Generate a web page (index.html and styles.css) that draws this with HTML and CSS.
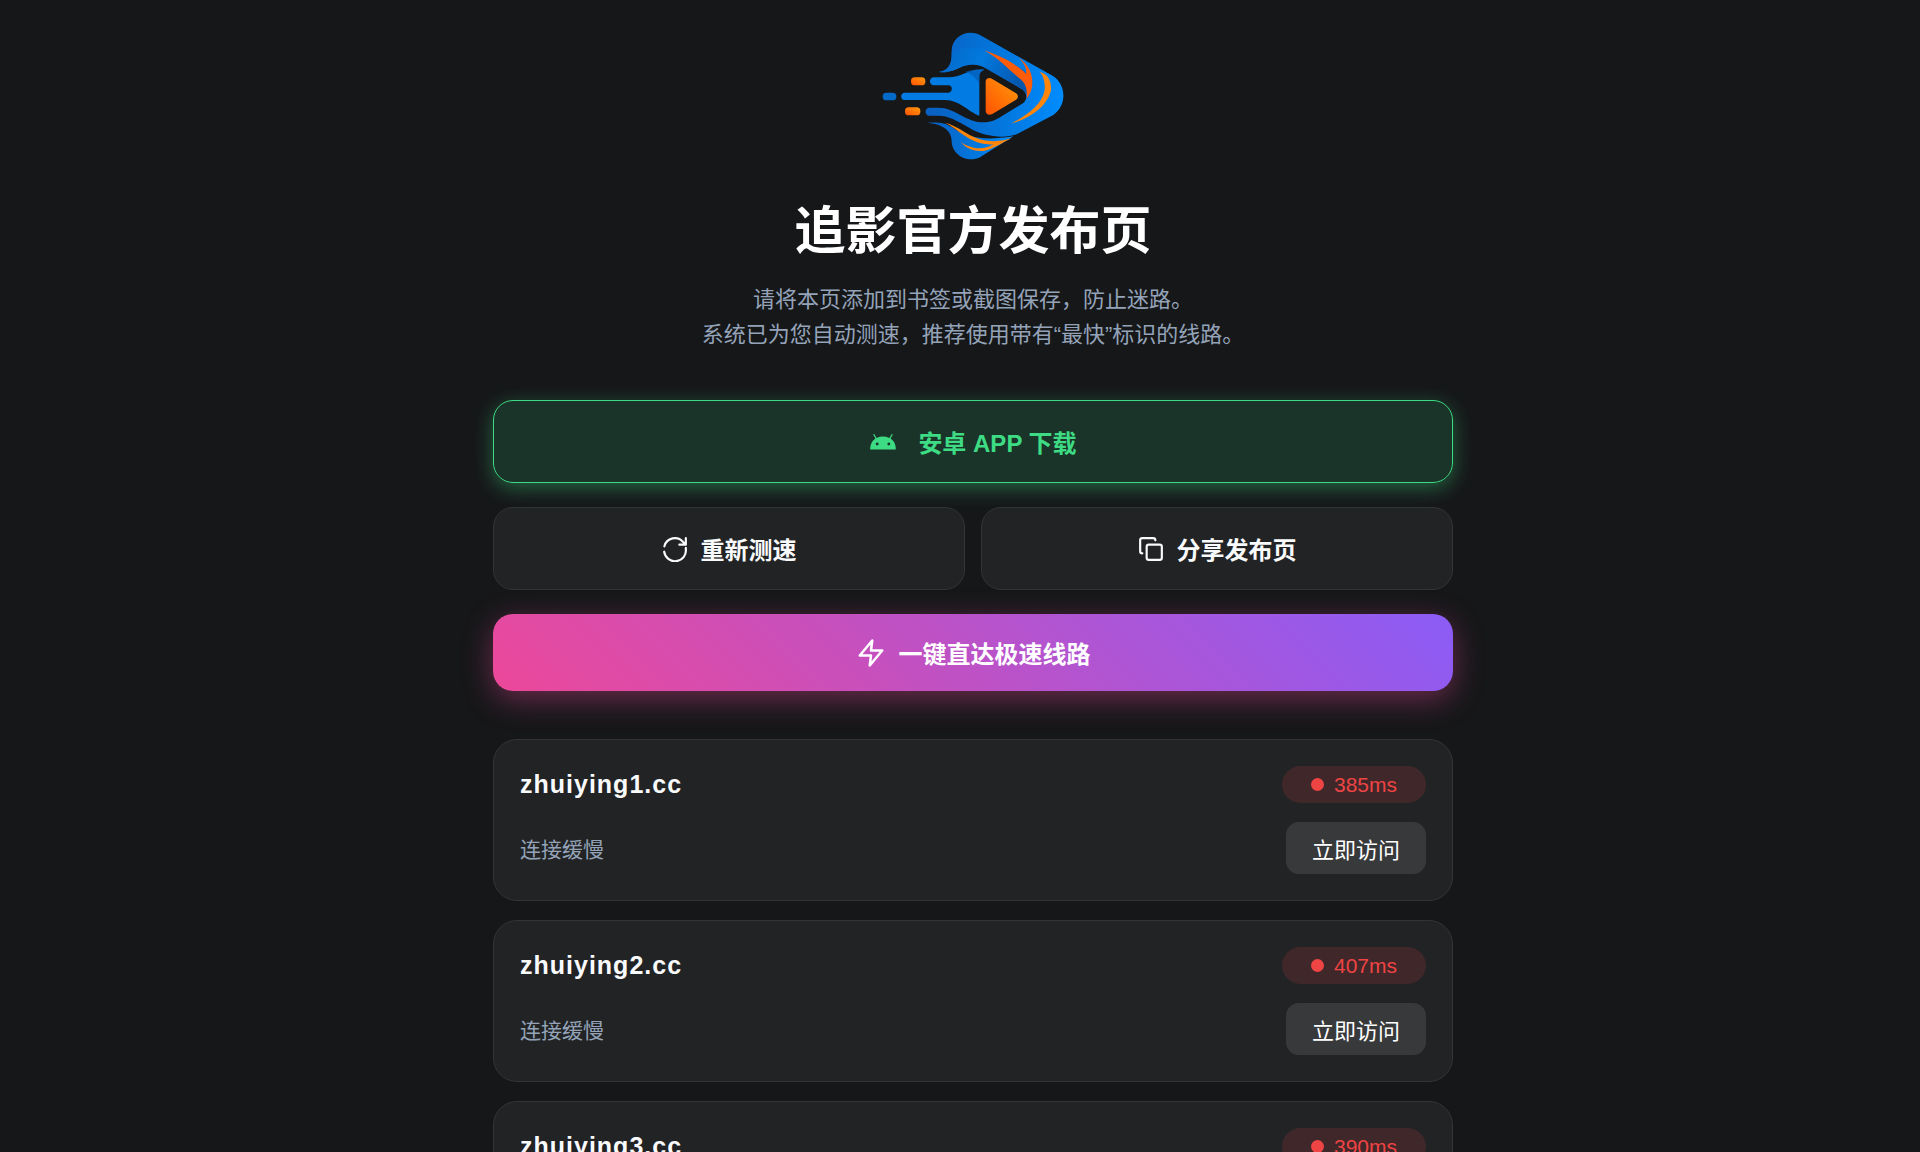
FILE: index.html
```html
<!DOCTYPE html>
<html lang="zh-CN">
<head>
    <meta charset="UTF-8">
    <meta name="viewport" content="width=device-width, initial-scale=1.0">
    <title>追影官方发布页</title>
    <link rel="stylesheet" href="styles.css">
</head>
<body>
    <div class="container">
        <header class="header">
            <svg class="logo" viewBox="-6 -1 630 450" role="img" aria-label="追影">
                <defs>
                    <linearGradient id="blue" x1="0" y1="0" x2="1" y2="0">
                        <stop offset="0" stop-color="#0a5fc0"/>
                        <stop offset="0.6" stop-color="#0279e0"/>
                        <stop offset="1" stop-color="#008cff"/>
                    </linearGradient>
                    <linearGradient id="top" x1="0" y1="0" x2="1" y2="0.3">
                        <stop offset="0" stop-color="#0566c6"/>
                        <stop offset="0.5" stop-color="#0279de"/>
                        <stop offset="1" stop-color="#0456ad"/>
                    </linearGradient>
                    <linearGradient id="orange" x1="0" y1="1" x2="1" y2="0">
                        <stop offset="0" stop-color="#ff5200"/>
                        <stop offset="1" stop-color="#ff9a0c"/>
                    </linearGradient>
                </defs>
                <!-- ring -->
                <path fill="url(#blue)" d="M207 155C235 152 245 130 245 105V92C245 50 290 25 330 44L545 165C590 190 592 255 550 284L440 342C400 356 340 348 300 324C260 300 235 286 205 286H178C163 286 163 262 178 262H205C255 262 285 305 340 306C365 306 380 298 395 288L460 248C475 235 470 215 455 206L345 142C320 128 295 131 275 139C250 150 235 158 207 155Z"/>
                <path fill="url(#top)" d="M245 95C290 70 340 80 385 105L460 150C490 175 485 215 470 235C474 222 468 214 455 206L345 142C320 128 295 131 275 139C250 150 235 158 207 155C235 152 245 130 245 105Z"/>
                <path fill="url(#blue)" d="M172 307C205 305 225 307 245 320C290 352 340 362 430 348L330 411C290 430 245 402 245 362C245 335 225 312 172 307Z"/>
                <!-- speed lines -->
                <path fill="#027be2" d="M192 171H235C275 171 300 142 343 148C333 152 328 158 328 168V286C295 275 270 239 225 239H104C90 239 90 217 104 217H235C248 217 250 195 235 195H192C176 195 176 171 192 171Z"/>
                <path fill="#0456ad" opacity="0.6" d="M285 155C305 147 325 145 343 148C333 152 328 158 328 168V190C315 170 305 160 285 155Z"/>
                <rect fill="#0569c8" x="38" y="217" width="41" height="23" rx="11"/>
                <rect fill="url(#orange)" x="123" y="171" width="43" height="24" rx="11"/>
                <rect fill="url(#orange)" x="105" y="261" width="46" height="24" rx="11"/>
                <!-- play -->
                <path fill="url(#orange)" d="M347 184C347 174 358 170 367 176L437 218C446 224 446 233 437 239L367 281C358 286 347 282 347 272Z"/>
                <!-- streaks -->
                <path fill="#ff5c08" d="M342 90C395 107 440 132 468 160C471 145 462 127 446 112C475 130 487 160 487 185C487 210 478 225 470 235C473 208 467 190 452 177C415 147 385 113 342 90Z"/>
                <path fill="#ff860a" d="M508 154C535 160 545 185 543 208C535 255 480 295 425 309C470 285 515 255 524 210C526 185 520 165 508 154Z"/>
                <path fill="#ff860a" d="M225 307C265 315 300 355 350 361C380 365 405 360 425 354C395 368 370 385 345 391C310 395 285 382 273 365C300 385 340 392 370 372C300 375 265 325 225 307Z"/>
            </svg>
            <h1>追影官方发布页</h1>
            <p>请将本页添加到书签或截图保存，防止迷路。<br>系统已为您自动测速，推荐使用带有“最快”标识的线路。</p>
        </header>

        <div class="actions">
            <a class="btn btn-android" href="#">
                <svg class="icon-android" viewBox="0 0 24 24" fill="currentColor"><path d="M18.500 9l1.800-3.200c.2-.5-.6-.9-.9-.4l-1.900 3.200a13 13 0 0 0-11 0L4.600 5.400c-.3-.5-1.100-.1-.9.4L5.500 9A11 11 0 0 0 1 18.500h22A11 11 0 0 0 18.500 9zM7 15a1.250 1.250 0 1 1 0-2.500 1.250 1.250 0 0 1 0 2.500zm10 0a1.250 1.250 0 1 1 0-2.500 1.250 1.250 0 0 1 0 2.500z"/></svg>
                安卓 APP 下载
            </a>
            <div class="row">
                <button class="btn btn-glass" type="button">
                    <svg class="icon" viewBox="0 0 24 24"><path d="M22 2v6h-6M2.200 9.500A10 10 0 0 1 19.500 5.500L22 8M22 11v1A10 10 0 0 1 2 14.500"/></svg>
                    重新测速
                </button>
                <button class="btn btn-glass" type="button">
                    <svg class="icon" viewBox="0 0 24 24"><rect x="8" y="8" width="14" height="14" rx="2"/><path d="M4 16c-1.100 0-2-.9-2-2V4c0-1.100.9-2 2-2h10c1.100 0 2 .9 2 2"/></svg>
                    分享发布页
                </button>
            </div>
            <button class="btn btn-primary" type="button">
                <svg class="icon" viewBox="0 0 24 24"><path d="M13 2L3 14h9l-1 8 10-12h-9l1-8z"/></svg>
                一键直达极速线路
            </button>
        </div>

        <main class="list">
            <div class="card">
                <div class="card-row">
                    <span class="domain">zhuiying1.cc</span>
                    <span class="ping">385ms</span>
                </div>
                <div class="card-row">
                    <span class="status">连接缓慢</span>
                    <a class="visit" href="#">立即访问</a>
                </div>
            </div>
            <div class="card">
                <div class="card-row">
                    <span class="domain">zhuiying2.cc</span>
                    <span class="ping">407ms</span>
                </div>
                <div class="card-row">
                    <span class="status">连接缓慢</span>
                    <a class="visit" href="#">立即访问</a>
                </div>
            </div>
            <div class="card">
                <div class="card-row">
                    <span class="domain">zhuiying3.cc</span>
                    <span class="ping">390ms</span>
                </div>
                <div class="card-row">
                    <span class="status">连接缓慢</span>
                    <a class="visit" href="#">立即访问</a>
                </div>
            </div>
        </main>
    </div>
</body>
</html>
```
FILE: styles.css
```css
* {
    box-sizing: border-box;
    margin: 0;
    padding: 0;
}
body {
    height: 100vh;
    overflow: hidden;
    padding: 20px 0 0 26px;
    background: #161719;
    color: #f8fafc;
    font-family: "Liberation Sans", "Noto Sans CJK SC", sans-serif;
}
.container {
    max-width: 960px;
    margin: 0 auto;
}
.header {
    text-align: center;
    margin-bottom: 48px;
}
.logo {
    display: block;
    width: 210px;
    height: 150px;
    margin: 0 auto 26px;
}
h1 {
    font-size: 51px;
    line-height: 72px;
    color: #fff;
    margin-bottom: 14px;
}
.header p {
    font-size: 22px;
    line-height: 35px;
    color: #94a3b8;
}
.actions {
    display: flex;
    flex-direction: column;
    gap: 24px;
    margin-bottom: 48px;
}
.row {
    display: grid;
    grid-template-columns: 1fr 1fr;
    gap: 16px;
}
.btn {
    display: flex;
    align-items: center;
    justify-content: center;
    gap: 13px;
    padding: 23px;
    border: 1px solid transparent;
    border-radius: 20px;
    font-family: inherit;
    font-size: 24px;
    font-weight: bold;
    color: #f8fafc;
    text-decoration: none;
    cursor: pointer;
}
.icon {
    width: 26px;
    height: 26px;
    fill: none;
    stroke: currentColor;
    stroke-width: 2;
    stroke-linecap: round;
    stroke-linejoin: round;
}
.icon-android {
    width: 28px;
    height: 28px;
}
.btn-android {
    gap: 21px;
    background: rgba(61, 220, 132, 0.15);
    border-color: #3ddc84;
    color: #3ddc84;
    box-shadow: 0 5px 20px rgba(61, 220, 132, 0.4);
}
.btn-glass {
    background: #222325;
    border-color: #333436;
}
.btn-primary {
    padding: 21px;
    border: 0;
    background: linear-gradient(45deg, #ec4899, #8b5cf6);
    color: #fff;
    box-shadow: 0 8px 30px rgba(236, 72, 153, 0.4);
}
.btn-primary .icon {
    width: 30px;
    height: 30px;
}
.list {
    display: flex;
    flex-direction: column;
    gap: 19px;
}
.card {
    display: flex;
    flex-direction: column;
    gap: 19px;
    padding: 26px;
    background: #222325;
    border: 1px solid #333436;
    border-radius: 24px;
}
.card-row {
    display: flex;
    align-items: center;
    justify-content: space-between;
}
.domain {
    font-size: 25px;
    font-weight: bold;
    letter-spacing: 1px;
}
.ping {
    display: flex;
    align-items: center;
    gap: 10px;
    padding: 0 29px;
    border-radius: 19px;
    background: rgba(239, 68, 68, 0.15);
    color: #ef4444;
    font-size: 21px;
    line-height: 37px;
}
.ping::before {
    content: "";
    width: 13px;
    height: 13px;
    border-radius: 50%;
    background: #ef4444;
}
.status {
    font-size: 21px;
    color: #94a3b8;
}
.visit {
    padding: 10px 26px;
    border-radius: 13px;
    background: #38393b;
    color: #fff;
    font-size: 22px;
    text-decoration: none;
}
```
